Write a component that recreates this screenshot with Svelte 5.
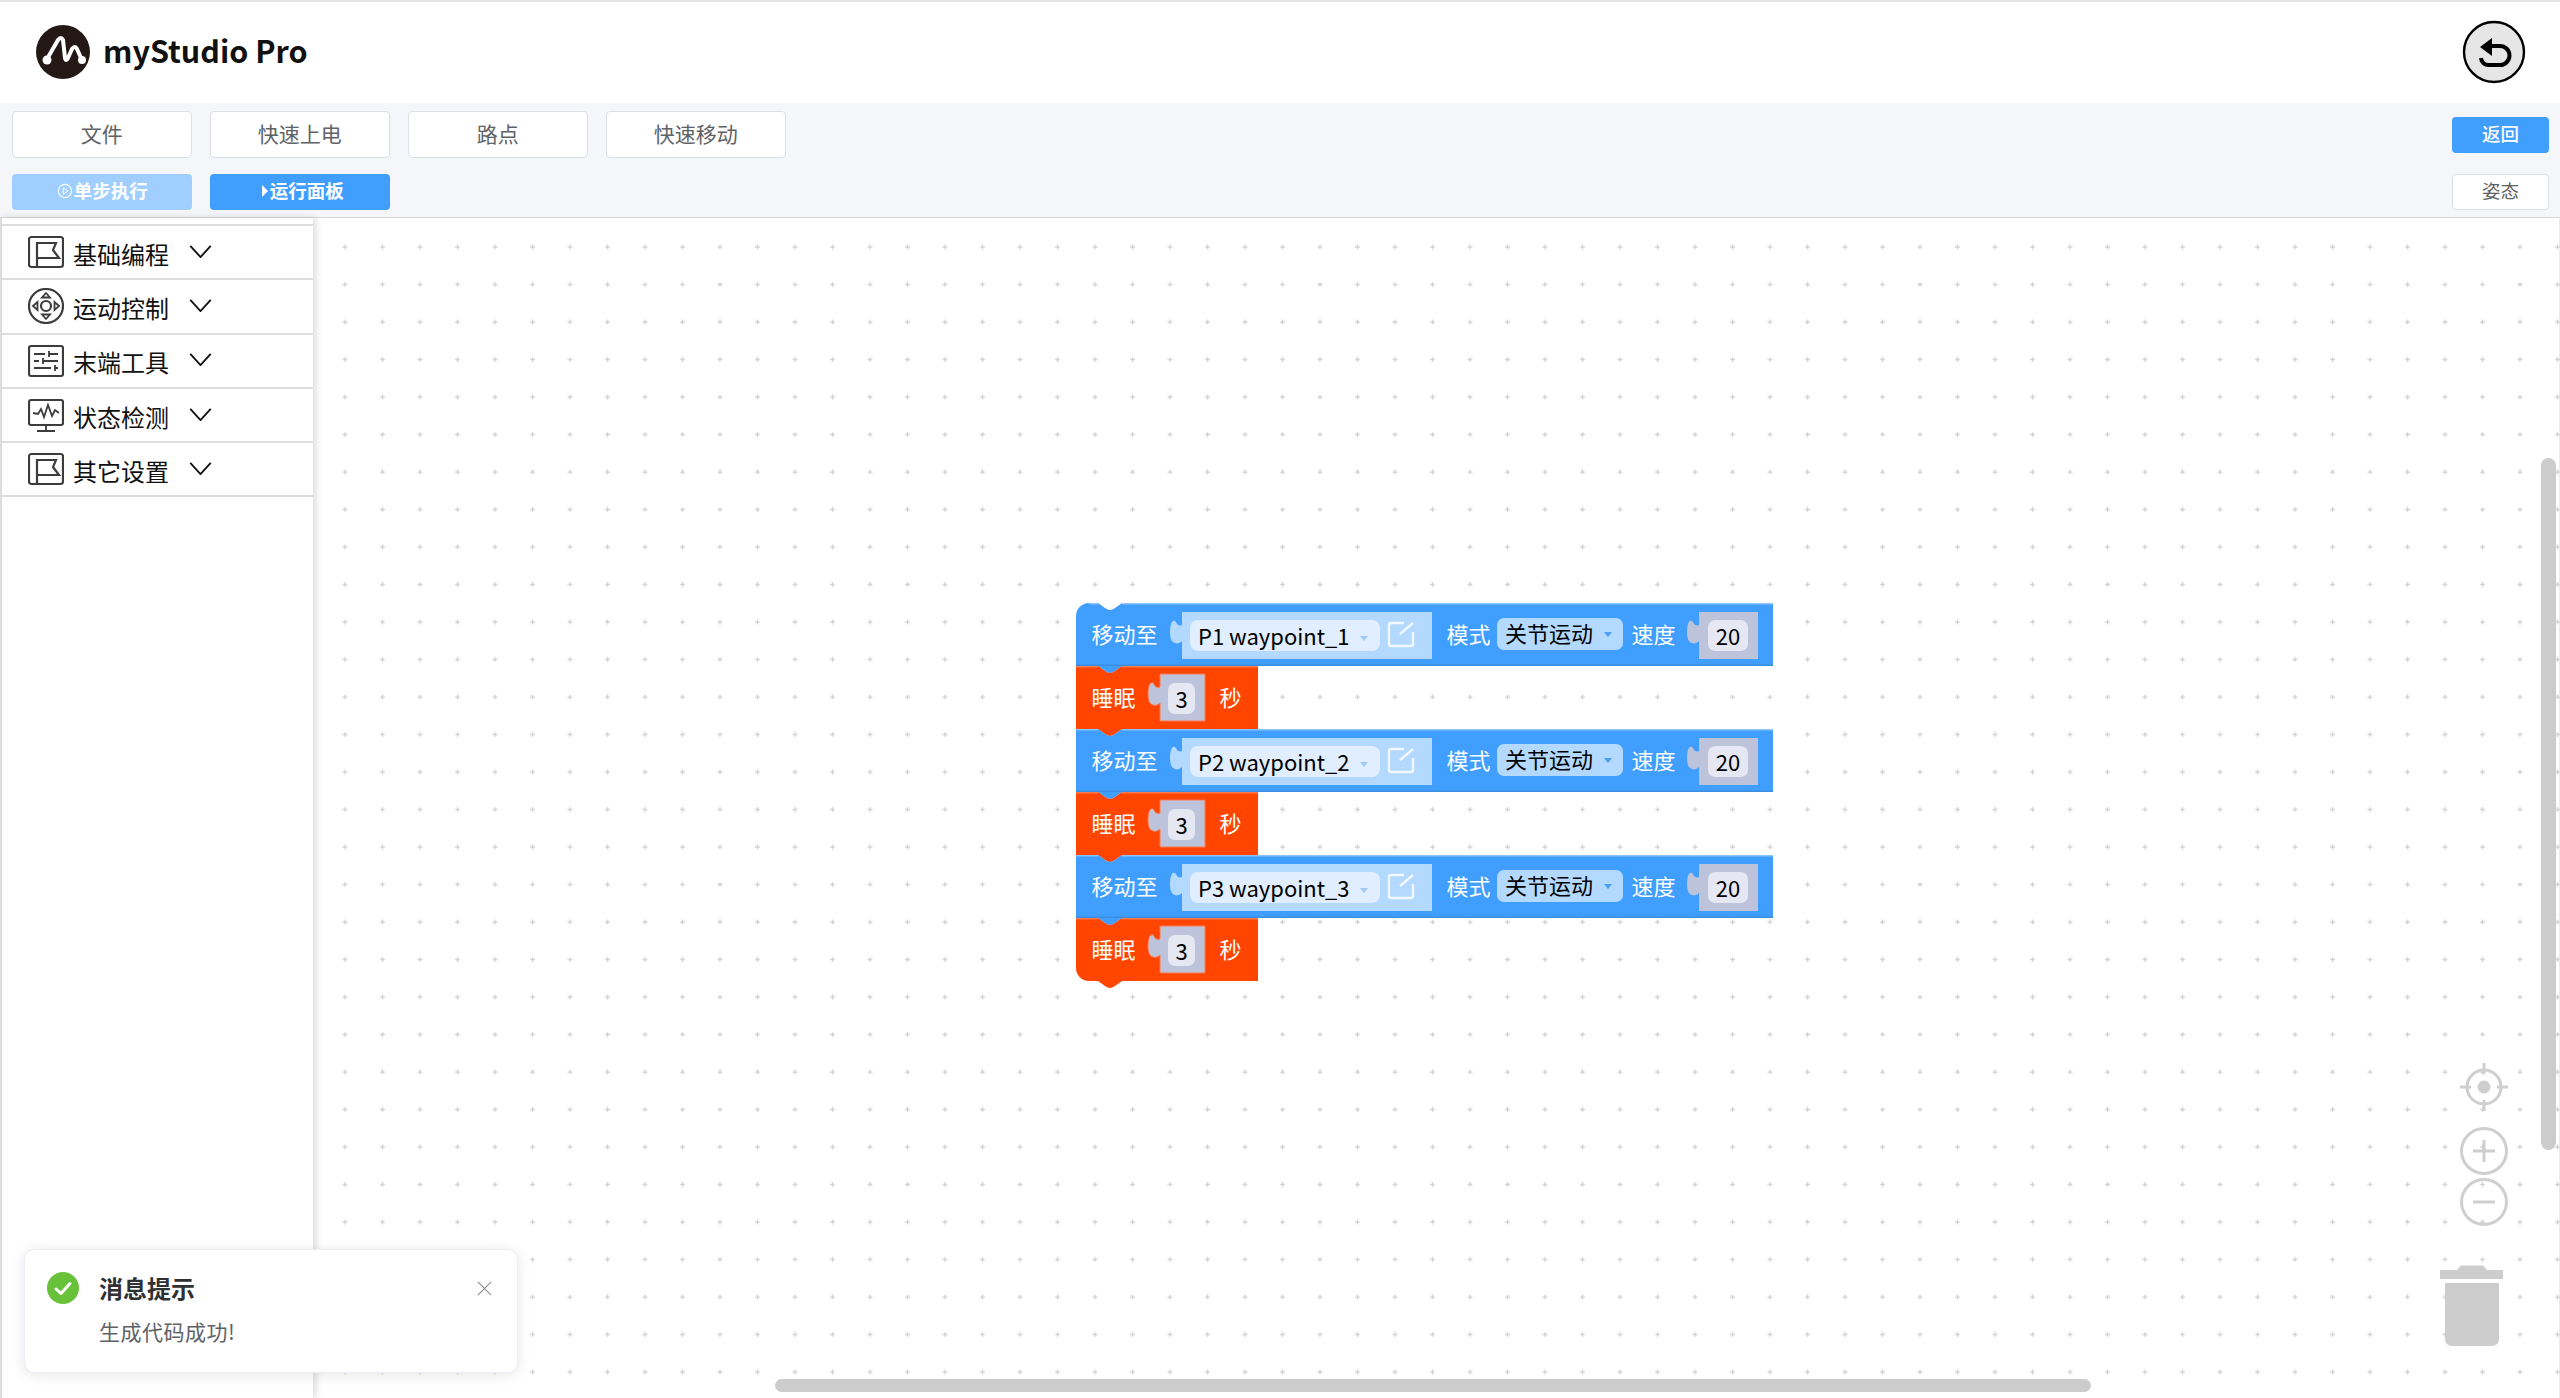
<script>
  const menu = [
    { label: '基础编程', icon: 'flag' },
    { label: '运动控制', icon: 'pad' },
    { label: '末端工具', icon: 'sliders' },
    { label: '状态检测', icon: 'monitor' },
    { label: '其它设置', icon: 'flag' }
  ];
  const tabs = ['文件', '快速上电', '路点', '快速移动'];
  const moves = [
    { name: 'P1 waypoint_1', y: 603 },
    { name: 'P2 waypoint_2', y: 729 },
    { name: 'P3 waypoint_3', y: 855 }
  ];
  const X = 1076;
  const notch = 'l7 5q3 2 5 2q2 0 5-2l7-5';
  const tab = 'l-7 5q-3 2-5 2q-2 0-5-2l-7-5';
  const socket = 'c-2 2-5 3-7 2c-4-1-5-6-5-11c0-5 1-10 3-11c2-1 3 1 4 3c1 1 3 2 5 1';
  const blockPath = (y, w, h, roundTop, roundBottom) =>
    `M${X} ${y + (roundTop ? 13 : 0)}` +
    (roundTop ? `a13 13 0 0 1 13-13` : '') +
    `H${X + 22}${notch}H${X + w}V${y + h}H${X + 46}${tab}` +
    (roundBottom ? `H${X + 13}a13 13 0 0 1-13-13Z` : `H${X}Z`);
  const inputPath = (x1, x2, y) => `M${x1} ${y}H${x2}V${y + 47}H${x1}V${y + 29}${socket}Z`;
</script>

<div class="page">
  <header class="head">
    <div class="brand">
      <svg class="logo" viewBox="0 0 54 54" aria-hidden="true">
        <circle cx="27" cy="27" r="27" fill="#231815" />
        <path d="M11 34L22 15Q25 11 27 15L29 33Q30 37 32 33L36 24Q39 20 41 24L46 35" fill="none" stroke="#fff" stroke-width="4" stroke-linecap="round" stroke-linejoin="round" />
        <circle cx="11" cy="35" r="4.5" fill="#fff" />
        <circle cx="46" cy="35" r="4" fill="#fff" />
      </svg>
      <span class="title">myStudio Pro</span>
    </div>
    <svg class="undo" viewBox="0 0 64 64" aria-hidden="true">
      <circle cx="32" cy="32" r="30" fill="#e6e6e6" stroke="#000" stroke-width="2.400" />
      <path d="M18 27L30 18V36Z" fill="#000" />
      <path d="M29 26H38a9.5 9.500 0 0 1 0 19H27a7.500 7.500 0 0 1-8-7" fill="none" stroke="#000" stroke-width="4" />
    </svg>
  </header>

  <div class="toolbar">
    <div class="row row1">
      <div class="group">
        {#each tabs as t}
          <button class="btn">{t}</button>
        {/each}
      </div>
      <button class="btn small primary">返回</button>
    </div>
    <div class="row row2">
      <div class="group">
        <button class="btn run disabled">
          <svg class="playc" viewBox="0 0 16 16" aria-hidden="true"><circle cx="8" cy="8" r="6.6" fill="none" stroke="#fff" stroke-width="1.1" /><path d="M6.3 4.8L11 8L6.3 11.2Z" fill="none" stroke="#fff" stroke-width="1" /></svg>单步执行
        </button>
        <button class="btn run primary"><span class="caret"></span>运行面板</button>
      </div>
      <button class="btn small plain">姿态</button>
    </div>
  </div>

  <main class="main">
    <aside class="side">
      {#each menu as m}
        <div class="item">
          <svg class="ico" viewBox="0 0 36 36" aria-hidden="true">
            {#if m.icon === 'flag'}
              <rect x="1" y="3" width="34" height="30" rx="2.5" />
              <path d="M9 33V9H28L25 16L31 24H9" />
            {:else if m.icon === 'pad'}
              <circle cx="18" cy="18" r="17" />
              <circle cx="18" cy="18" r="5" />
              <path class="thin" d="M18 5L22 9.500H14ZM18 31L22 26.500H14ZM5 18L9.500 14V22ZM31 18L26.500 14V22Z" />
            {:else if m.icon === 'sliders'}
              <rect x="1" y="3" width="34" height="30" rx="2" />
              <path class="thin" d="M6 11H17M21 11H30M21 8V14M6 18H11M15 18H30M15 15V21M6 25H23M27 25H30M27 22V28" />
            {:else}
              <rect x="1" y="3" width="34" height="25" rx="2" />
              <path class="thin" d="M5 16L10 17L13 12L16 20L20 8L24 19L27 13L31 16M18 28V34M9 34H27" />
            {/if}
          </svg>
          <span class="label">{m.label}</span>
          <svg class="chev" viewBox="0 0 24 14" aria-hidden="true"><path d="M1 1L12 13L23 1" /></svg>
        </div>
      {/each}
    </aside>

    <div class="canvas">
      <svg class="ws" viewBox="313 218 2247 1180" aria-label="workspace">
        <defs>
          <pattern id="dots" patternUnits="userSpaceOnUse" x="0" y="0" width="37.5" height="37.5">
            <path d="M5 22H10M7.5 19.500V24.500" stroke="#cfcfcf" stroke-width="1.300" fill="none" />
          </pattern>
        </defs>
        <rect x="313" y="218" width="2247" height="1180" fill="url(#dots)" />

        {#each moves as b, i}
          <!-- move block -->
          <path d={blockPath(b.y, 697, 63, i === 0, false)} fill="#409eff" />
          <path d="M{X + (i === 0 ? 13 : 0)} {b.y + 0.7}H{X + 22}" stroke="#8cc4ff" stroke-width="1.5" />
          <path d="M{X + 46} {b.y + 0.7}H{X + 697}" stroke="#8cc4ff" stroke-width="1.5" />
          <path d="M{X} {b.y + 62.300}H{X + 697}" stroke="#3a8ee0" stroke-width="1.5" />
          <text class="w" x="1091.500" y={b.y + 40}>移动至</text>
          <path d={inputPath(1182, 1432, b.y + 9)} fill="#b3d9ff" />
          <rect x="1190" y={b.y + 17} width="190" height="31" rx="8" fill="#e0eeff" />
          <text class="k" x="1198" y={b.y + 42}>{b.name}</text>
          <path d="M1360 {b.y + 33}h8l-4 5Z" fill="#a3c9f2" />
          <path d="M1404 {b.y + 20}H1391a2 2 0 0 0-2 2V{b.y + 41}a2 2 0 0 0 2 2H1411a2 2 0 0 0 2-2V{b.y + 29}M1400 {b.y + 31}L1413 {b.y + 20}" fill="none" stroke="#f2f8ff" stroke-width="2.400" />
          <text class="w" x="1446.500" y={b.y + 40}>模式</text>
          <rect x="1497" y={b.y + 15} width="126" height="32" rx="7" fill="#b3d9ff" />
          <text class="k2" x="1505" y={b.y + 39}>关节运动</text>
          <path d="M1604 {b.y + 29}h8l-4 5Z" fill="#4a9ff0" />
          <text class="w" x="1631.500" y={b.y + 40}>速度</text>
          <path d={inputPath(1699, 1758, b.y + 9)} fill="#bcc3da" />
          <rect x="1708" y={b.y + 17} width="40" height="31" rx="7" fill="#e5e7f2" />
          <text class="k" x="1728" y={b.y + 42} text-anchor="middle">20</text>

          <!-- sleep block -->
          <path d={blockPath(b.y + 63, 182, 63, false, i === 2)} fill="#ff4500" />
          <path d="M{X} {b.y + 63.700}H{X + 22}M{X + 46} {b.y + 63.700}H{X + 182}" stroke="#ff7a4d" stroke-width="1.500" />
          <text class="w" x="1091.500" y={b.y + 103}>睡眠</text>
          <path d={inputPath(1160, 1205, b.y + 71)} fill="#bcc3da" stroke="#ff7a4d" stroke-width="1" />
          <rect x="1168" y={b.y + 80} width="27" height="31" rx="7" fill="#e5e7f2" />
          <text class="k" x="1181.500" y={b.y + 105} text-anchor="middle">3</text>
          <text class="w" x="1219.500" y={b.y + 103}>秒</text>
        {/each}

        <!-- workspace controls -->
        <g class="ctl">
          <circle cx="2484" cy="1087" r="17" />
          <path d="M2484 1063V1074M2484 1100V1111M2460 1087H2471M2497 1087H2508" />
          <circle cx="2484" cy="1087" r="6.500" class="fillc" />
          <circle cx="2484" cy="1151" r="22.500" />
          <path d="M2473 1151H2495M2484 1140V1162" />
          <circle cx="2484" cy="1202" r="22.500" />
          <path d="M2473 1202H2495" />
        </g>
        <path d="M2440 1270H2457L2461 1265.500H2483L2487 1270H2503V1279H2440ZM2445 1283H2499V1339a7 7 0 0 1-7 7H2452a7 7 0 0 1-7-7Z" fill="#cdcdcd" />
        <rect x="2541" y="458" width="15" height="692" rx="7.500" fill="#ccc" />
        <rect x="775" y="1379" width="1316" height="13" rx="6.500" fill="#ccc" />
      </svg>
    </div>

    <div class="toast">
      <svg class="ok" viewBox="0 0 32 32" aria-hidden="true">
        <circle cx="16" cy="16" r="16" fill="#67c23a" />
        <path d="M9 17L14 21.500L23 11.500" fill="none" stroke="#fff" stroke-width="3" stroke-linecap="round" stroke-linejoin="round" />
      </svg>
      <div class="msg">
        <div class="mt">消息提示</div>
        <div class="mb">生成代码成功!</div>
      </div>
      <svg class="close" viewBox="0 0 16 16" aria-hidden="true"><path d="M1 1L15 15M15 1L1 15" /></svg>
    </div>
  </main>
</div>

<style>
  :global(body) { margin: 0; background: #fff; }
  .page {
    width: 2560px;
    height: 1398px;
    display: flex;
    flex-direction: column;
    overflow: hidden;
    font-family: "Noto Sans CJK SC", "Noto Sans", sans-serif;
  }
  .head {
    box-sizing: border-box;
    height: 103px;
    flex: none;
    border-top: 2px solid #e4e4e4;
    display: flex;
    align-items: center;
    justify-content: space-between;
    padding: 0 34px 1px 36px;
    background: #fff;
  }
  .brand { display: flex; align-items: center; gap: 13px; }
  .logo { width: 54px; height: 54px; display: block; }
  .title { font-family: "Noto Sans CJK SC", sans-serif; font-size: 30.500px; font-weight: 700; color: #111; line-height: 1; margin-top: -3px; }
  .undo { width: 64px; height: 64px; display: block; }
  .toolbar {
    box-sizing: border-box;
    height: 115px;
    flex: none;
    background: #f4f6fa;
    border-bottom: 1px solid #d8d8d8;
    padding: 8px 11px 0 12px;
    display: flex;
    flex-direction: column;
    gap: 16px;
  }
  .row { display: flex; justify-content: space-between; align-items: flex-start; }
  .group { display: flex; gap: 18.500px; }
  .btn {
    box-sizing: border-box;
    width: 179.500px;
    height: 47px;
    padding: 0 0 3px;
    background: #fff;
    border: 1px solid #dcdfe6;
    border-radius: 4px;
    color: #606266;
    font: 21px/1 "Noto Sans CJK SC", sans-serif;
  }
  .row1 .small { margin-top: 6px; }
  .btn.small { width: 97px; height: 36px; font-size: 18.500px; }
  .btn.run { height: 36px; font-size: 18.500px; font-weight: 700; color: #fff; display: flex; align-items: center; justify-content: center; border: 0; }
  .primary { background: #409eff; border: 0; color: #fff; }
  .btn.small.primary { font-weight: 500; color: #fff; border: 0; }
  .disabled { background: #a0cfff; }
  .playc { width: 16px; height: 16px; margin-right: 1px; margin-left: 1px; }
  .caret { width: 0; height: 0; border-left: 6px solid #fff; border-top: 6px solid transparent; border-bottom: 6px solid transparent; margin-right: 2px; margin-left: 6px; }
  .main { flex: 1; display: flex; position: relative; min-height: 0; }
  .side {
    box-sizing: border-box;
    width: 313px;
    flex: none;
    padding-top: 6px;
    background: #fff;
    border-left: 2px solid #ddd;
    box-shadow: 3px 0 7px rgba(0, 0, 0, 0.14);
    position: relative;
    z-index: 1;
  }
  .item {
    box-sizing: border-box;
    height: 54.300px;
    border-top: 2px solid #ddd;
    padding-left: 26px;
    display: flex;
    align-items: center;
    gap: 9px;
  }
  .item:last-child { border-bottom: 2px solid #ddd; height: 56px; }
  .ico { width: 36px; height: 36px; flex: none; }
  .ico :global(*) { fill: none; stroke: #3c3c3c; stroke-width: 2.200; }
  .ico .thin { stroke-width: 1.800; }
  .label { font-size: 24px; color: #111; width: 96px; white-space: nowrap; line-height: 1; margin-top: 3px; }
  .chev { width: 23px; height: 13px; margin-left: 11px; margin-top: -2px; fill: none; stroke: #111; stroke-width: 2; }
  .canvas { flex: 1; position: relative; border-right: 1px solid #ececec; }
  .ws { position: absolute; inset: 0; width: 2247px; height: 1180px; display: block; }
  .w { font-size: 22px; fill: #fff; }
  .k { font-size: 22px; fill: #000; }
  .k2 { font-size: 22px; fill: #000; }
  .ctl { fill: none; stroke: #cfcfcf; stroke-width: 3; }
  .ctl .fillc { fill: #cfcfcf; stroke: none; }
  .toast {
    position: absolute;
    left: 24px;
    top: 1031px;
    box-sizing: border-box;
    width: 494px;
    height: 124px;
    background: #fff;
    border: 1px solid #ebeef5;
    border-radius: 10px;
    box-shadow: 0 2px 14px rgba(0, 0, 0, 0.1);
    padding: 22px 0 0 22px;
    display: flex;
    z-index: 2;
  }
  .ok { width: 32px; height: 32px; flex: none; }
  .msg { margin-left: 20px; }
  .mt { font-size: 24px; font-weight: 700; color: #303133; line-height: 32px; }
  .mb { font-size: 21px; color: #606266; line-height: 28px; margin-top: 13px; letter-spacing: 0.5px; }
  .close { position: absolute; left: 452px; top: 31px; width: 15px; height: 15px; fill: none; stroke: #909399; stroke-width: 1.300; }
</style>
